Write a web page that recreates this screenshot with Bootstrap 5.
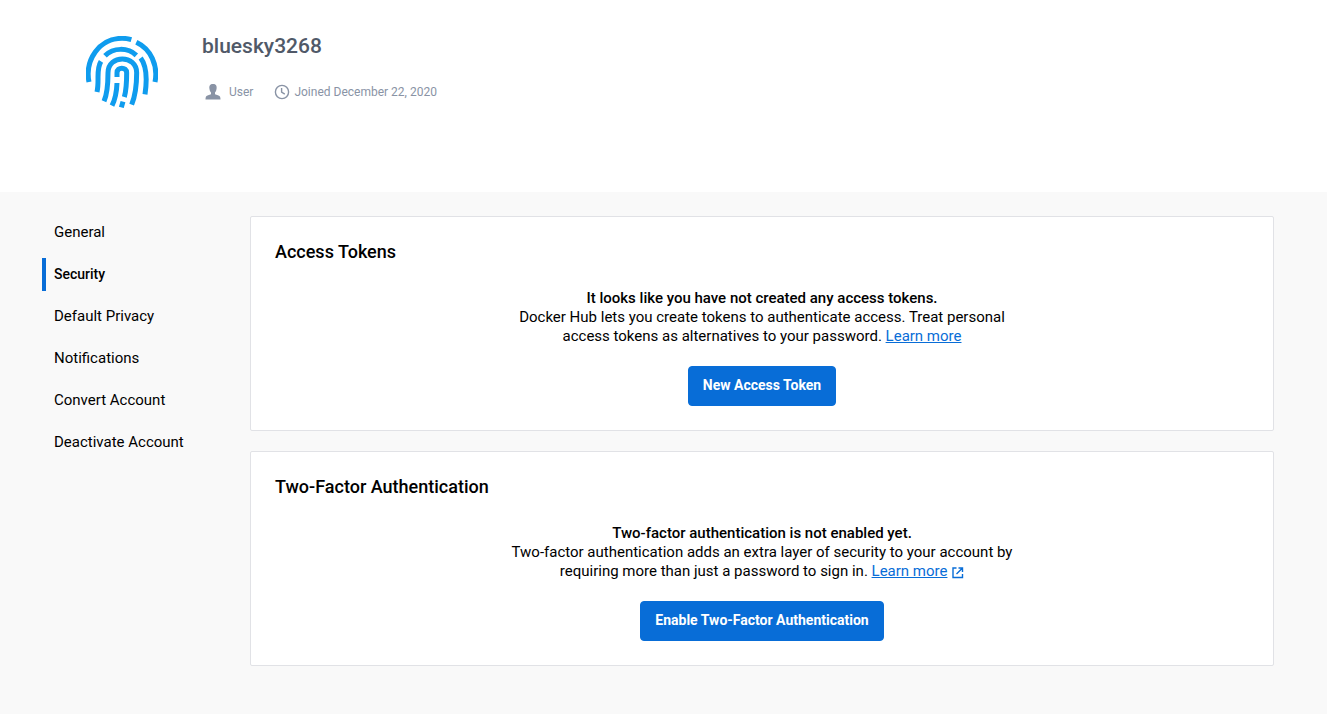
<!DOCTYPE html>
<html lang="en">
<head>
<meta charset="utf-8">
<meta name="viewport" content="width=device-width, initial-scale=1">
<title>Account settings</title>
<link href="https://cdn.jsdelivr.net/npm/bootstrap@5.3.0/dist/css/bootstrap.min.css" rel="stylesheet">
<style>
  body { font-family: Roboto, "Liberation Sans", sans-serif; font-size: 15px; line-height: 19px; color: #000; background: #f9f9f9; }
  .profile { min-height: 192px; padding: 36px 86px; gap: 44px; }
  .profile h1 { font-size: 21px; line-height: 20px; font-weight: 500; color: #505968; margin-bottom: 28px; }
  .meta { font-size: 12px; line-height: 16px; color: #8993a5; gap: 21px; padding-left: 3px; }
  .settings { padding: 24px 53px 48px 42px; }
  .side { width: 208px; }
  .side .nav-link { color: #000; padding: 7px 8px; border-left: 4px solid transparent; margin-bottom: 9px; line-height: 19px; }
  .side .nav-link.active { border-color: #086dd7; font-size: 14px; font-weight: 500; }
  .panels { gap: 20px; }
  .panel { border: 1px solid #e1e2e6; border-radius: 2px; padding: 24px; }
  .panel h2 { font-size: 18px; line-height: 22px; font-weight: 500; margin-bottom: 26px; }
  .blurb { max-width: 510px; margin-bottom: 20px; }
  .blurb strong { font-weight: 500; }
  .blurb a { color: #086dd7; }
  .btn-main { --bs-btn-color: #fff; --bs-btn-bg: #086dd7; --bs-btn-border-color: #086dd7; --bs-btn-hover-color: #fff; --bs-btn-hover-bg: #075fbc; --bs-btn-font-size: 14px; --bs-btn-border-radius: 4px; padding: 8px 14px 10px; font-weight: 700; line-height: 20px; }
</style>
</head>
<body class="min-vh-100">
<header class="profile bg-white d-flex">
  <svg class="flex-shrink-0" width="72" height="72" viewBox="18 18 216 216" fill="none" stroke="#0f9cee" stroke-width="15" role="img" aria-label="Avatar">
    <path d="M27 156C14 91 57 25 126 25q14 0 28 4M169 37c43 20 66 69 56 119M63 94C47 119 59 150 51 186M75 77c25-25 69-25 94-1M182 84c19 25 19 68 13 109M72 214c12-28 12-60 12-86 0-55 86-55 86 0 0 34-3 66-15 96M96 227c10-20 14-40 15-68M111 141v-13c0-18 29-18 29 0 0 27 0 48-7 73M129 215l-5 17"/>
  </svg>
  <div>
    <h1>bluesky3268</h1>
    <div class="meta d-flex">
      <span class="d-flex align-items-center gap-2"><svg width="16" height="16" viewBox="0 0 16 16" fill="#8993a5" aria-hidden="true"><path d="M8 0C5 0 4 2 4.400 4.500c.2 2 .8 3 1.600 4v1.700L2.500 11.500C1 12 .5 13 .5 15.500h15c0-2.500-.5-3.500-2-4L10 10.200V8.500c.8-1 1.400-2 1.600-4C12 2 11 0 8 0Z"/></svg>User</span>
      <span class="d-flex align-items-center gap-1"><svg width="16" height="16" viewBox="0 0 16 16" fill="none" stroke="#8993a5" stroke-width="1.400" aria-hidden="true"><circle cx="8" cy="8" r="6.600"/><path d="M7.600 4v4.200l3.200 2"/></svg>Joined December 22, 2020</span>
    </div>
  </div>
</header>
<main class="settings d-flex">
  <nav class="side nav flex-column flex-shrink-0" aria-label="Settings">
    <a class="nav-link" href="#">General</a>
    <a class="nav-link active" aria-current="page" href="#">Security</a>
    <a class="nav-link" href="#">Default Privacy</a>
    <a class="nav-link" href="#">Notifications</a>
    <a class="nav-link" href="#">Convert Account</a>
    <a class="nav-link" href="#">Deactivate Account</a>
  </nav>
  <div class="panels flex-grow-1 d-flex flex-column">
    <section class="panel bg-white">
      <h2>Access Tokens</h2>
      <div class="text-center">
        <p class="blurb mx-auto"><strong>It looks like you have not created any access tokens.</strong><br>Docker Hub lets you create tokens to authenticate access. Treat personal access tokens as alternatives to your password. <a href="#">Learn more</a></p>
        <button type="button" class="btn btn-main">New Access Token</button>
      </div>
    </section>
    <section class="panel bg-white">
      <h2>Two-Factor Authentication</h2>
      <div class="text-center">
        <p class="blurb mx-auto"><strong>Two-factor authentication is not enabled yet.</strong><br>Two-factor authentication adds an extra layer of security to your account by requiring more than just a password to sign in. <a href="#">Learn more</a> <svg width="13" height="13" viewBox="0 0 13 13" fill="none" stroke="#086dd7" stroke-width="1.400" aria-hidden="true"><path d="M5.500 2H2v9.500h9.500V8M7.500 2h4v4M11.500 2l-6 6"/></svg></p>
        <button type="button" class="btn btn-main">Enable Two-Factor Authentication</button>
      </div>
    </section>
  </div>
</main>
<script src="https://cdn.jsdelivr.net/npm/bootstrap@5.3.0/dist/js/bootstrap.bundle.min.js"></script>
</body>
</html>
